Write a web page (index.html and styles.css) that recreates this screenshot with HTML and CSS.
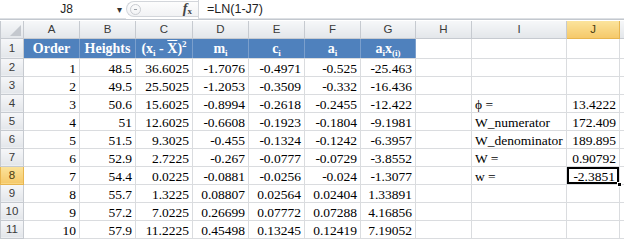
FILE: index.html
```html
<!DOCTYPE html>
<html lang="en">
<head>
  <meta charset="UTF-8" />
  <title>Shapiro-Wilk worksheet</title>
  <link rel="stylesheet" href="styles.css">
</head>
<body>
  <div class="formula-bar">
    <div class="name-box">
      <span class="name">J8</span>
      <span class="drop">&#9662;</span>
    </div>
    <div class="fx-area">
      <span class="grip"><span></span></span>
      <span class="fx"><i>f</i><sub>x</sub></span>
    </div>
    <div class="formula">=LN(1-J7)</div>
  </div>

  <table class="sheet">
    <colgroup>
      <col class="c-row"><col class="c-std"><col class="c-std"><col class="c-wide">
      <col class="c-std"><col class="c-std"><col class="c-std"><col class="c-narrow">
      <col class="c-std"><col class="c-label"><col class="c-j"><col class="c-rest">
    </colgroup>
    <tr class="col-head">
      <th class="corner"><span class="tri"></span></th>
      <th>A</th><th>B</th><th>C</th><th>D</th><th>E</th><th>F</th><th>G</th><th>H</th><th>I</th>
      <th class="active">J</th><th></th>
    </tr>
    <tr class="head-row">
      <th class="row-num">1</th>
      <td class="blue">Order</td>
      <td class="blue">Heights</td>
      <td class="blue">(x<sub>i</sub> - <span class="bar">X</span>)<sup>2</sup></td>
      <td class="blue">m<sub>i</sub></td>
      <td class="blue">c<sub>i</sub></td>
      <td class="blue">a<sub>i</sub></td>
      <td class="blue">a<sub>i</sub>x<sub>(i)</sub></td>
      <td></td><td></td><td></td><td></td>
    </tr>
    <tr>
      <th class="row-num">2</th>
      <td>1</td><td>48.5</td><td>36.6025</td><td>-1.7076</td><td>-0.4971</td><td>-0.525</td><td>-25.463</td>
      <td></td><td></td><td></td><td></td>
    </tr>
    <tr>
      <th class="row-num">3</th>
      <td>2</td><td>49.5</td><td>25.5025</td><td>-1.2053</td><td>-0.3509</td><td>-0.332</td><td>-16.436</td>
      <td></td><td></td><td></td><td></td>
    </tr>
    <tr>
      <th class="row-num">4</th>
      <td>3</td><td>50.6</td><td>15.6025</td><td>-0.8994</td><td>-0.2618</td><td>-0.2455</td><td>-12.422</td>
      <td></td><td class="label">&#981; =</td><td>13.4222</td><td></td>
    </tr>
    <tr>
      <th class="row-num">5</th>
      <td>4</td><td>51</td><td>12.6025</td><td>-0.6608</td><td>-0.1923</td><td>-0.1804</td><td>-9.1981</td>
      <td></td><td class="label">W_numerator</td><td>172.409</td><td></td>
    </tr>
    <tr>
      <th class="row-num">6</th>
      <td>5</td><td>51.5</td><td>9.3025</td><td>-0.455</td><td>-0.1324</td><td>-0.1242</td><td>-6.3957</td>
      <td></td><td class="label">W_denominator</td><td>189.895</td><td></td>
    </tr>
    <tr>
      <th class="row-num">7</th>
      <td>6</td><td>52.9</td><td>2.7225</td><td>-0.267</td><td>-0.0777</td><td>-0.0729</td><td>-3.8552</td>
      <td></td><td class="label">W =</td><td>0.90792</td><td></td>
    </tr>
    <tr>
      <th class="row-num active">8</th>
      <td>7</td><td>54.4</td><td>0.0225</td><td>-0.0881</td><td>-0.0256</td><td>-0.024</td><td>-1.3077</td>
      <td></td><td class="label">w =</td><td class="selected">-2.3851<span class="handle"></span></td><td></td>
    </tr>
    <tr>
      <th class="row-num">9</th>
      <td>8</td><td>55.7</td><td>1.3225</td><td>0.08807</td><td>0.02564</td><td>0.02404</td><td>1.33891</td>
      <td></td><td></td><td></td><td></td>
    </tr>
    <tr>
      <th class="row-num">10</th>
      <td>9</td><td>57.2</td><td>7.0225</td><td>0.26699</td><td>0.07772</td><td>0.07288</td><td>4.16856</td>
      <td></td><td></td><td></td><td></td>
    </tr>
    <tr>
      <th class="row-num">11</th>
      <td>10</td><td>57.9</td><td>11.2225</td><td>0.45498</td><td>0.13245</td><td>0.12419</td><td>7.19052</td>
      <td></td><td></td><td></td><td></td>
    </tr>
  </table>
</body>
</html>
```

FILE: styles.css
```css
* {
  box-sizing: border-box;
}
html, body {
  margin: 0;
  overflow: hidden;
  background: #fff;
}
body {
  width: 624px;
  height: 243px;
  font-family: 'Liberation Serif', serif;
}

/* formula bar */
.formula-bar {
  display: flex;
  height: 20px;
  border-bottom: 1px solid #c3c8cf;
  background: #fff;
  font-family: 'Liberation Sans', sans-serif;
  font-size: 12px;
  color: #222;
}
.name-box {
  width: 126px;
  display: flex;
  align-items: center;
  padding-right: 4px;
  border-bottom: 1px solid #dde0e4;
}
.name-box .name {
  flex: 1;
  text-align: center;
  padding-left: 16px;
}
.name-box .drop {
  font-size: 10px;
  color: #333;
}
.fx-area {
  width: 72px;
  margin: 1px 0 2px;
  display: flex;
  align-items: center;
  justify-content: space-between;
  border: 1px solid #d3d6db;
  border-right: none;
  border-radius: 9px 0 0 9px;
  padding: 0 6px 0 3px;
  background: linear-gradient(#fdfdfd, #f1f2f4);
}
.grip {
  width: 11px;
  height: 11px;
  border: 1px solid #c9ccd1;
  border-radius: 50%;
  display: flex;
  align-items: center;
  justify-content: center;
}
.grip span {
  width: 3px;
  height: 1px;
  background: #9aa0a8;
}
.fx {
  font-family: 'Liberation Serif', serif;
  font-size: 14px;
  font-weight: bold;
  color: #444;
}
.fx sub {
  font-size: 9px;
  vertical-align: -1px;
}
.formula {
  flex: 1;
  padding-left: 8px;
  display: flex;
  align-items: center;
  border-left: 1px solid #d3d6db;
  border-bottom: 1px solid #dde0e4;
  font-size: 12.5px;
}

/* sheet grid */
.sheet {
  margin-top: 1px;
  border-collapse: collapse;
  table-layout: fixed;
  width: 640px;
}
.c-row { width: 23px; }
.c-std { width: 56px; }
.c-wide { width: 57px; }
.c-narrow { width: 55px; }
.c-label { width: 95px; }
.c-j { width: 53px; }
.c-rest { width: 21px; }

.sheet tr {
  height: 18px;
}
.sheet td {
  border: 1px solid #dadcdf;
  padding: 0 3px 0 2px;
  font-size: 13.5px;
  line-height: 15px;
  text-align: right;
  vertical-align: bottom;
  white-space: nowrap;
  overflow: hidden;
  color: #000;
}
.sheet th {
  padding: 0;
  font-family: 'Liberation Sans', sans-serif;
  font-weight: normal;
  font-size: 11.5px;
  color: #3a3a3a;
  background: linear-gradient(#f6f7f9, #e3e6ea);
  border: 1px solid #c6cad0;
  text-align: center;
}
.sheet .col-head {
  height: 17px;
}
.sheet .col-head th {
  border-top: none;
}
.sheet th.active {
  background: linear-gradient(#fbe39c, #f5c96a);
  border-color: #e7b54f;
  color: #4a3b10;
}
.corner {
  position: relative;
}
.corner .tri {
  position: absolute;
  right: 2px;
  bottom: 2px;
  width: 0;
  height: 0;
  border-left: 11px solid transparent;
  border-bottom: 11px solid #c4c8ce;
}

.sheet .head-row {
  height: 20px;
}
.sheet td.blue {
  background: #4f81bd;
  color: #fff;
  font-weight: bold;
  font-size: 14px;
  text-align: center;
  vertical-align: middle;
  border-color: #7b9fcc;
  border-bottom-color: #dadcdf;
  padding: 0;
}
.blue sub {
  font-size: 9px;
  vertical-align: -3px;
  line-height: 0;
}
.blue sup {
  font-size: 9px;
  vertical-align: 6px;
  line-height: 0;
}
.bar {
  text-decoration: overline;
}

.sheet td.label {
  text-align: left;
  padding-left: 3px;
}
.sheet td.selected {
  position: relative;
  box-shadow: inset 0 0 0 2px #000;
  padding-right: 4px;
  overflow: visible;
}
.handle {
  position: absolute;
  right: -3px;
  bottom: -3px;
  width: 5px;
  height: 5px;
  background: #000;
  border: 1px solid #fff;
}
```
